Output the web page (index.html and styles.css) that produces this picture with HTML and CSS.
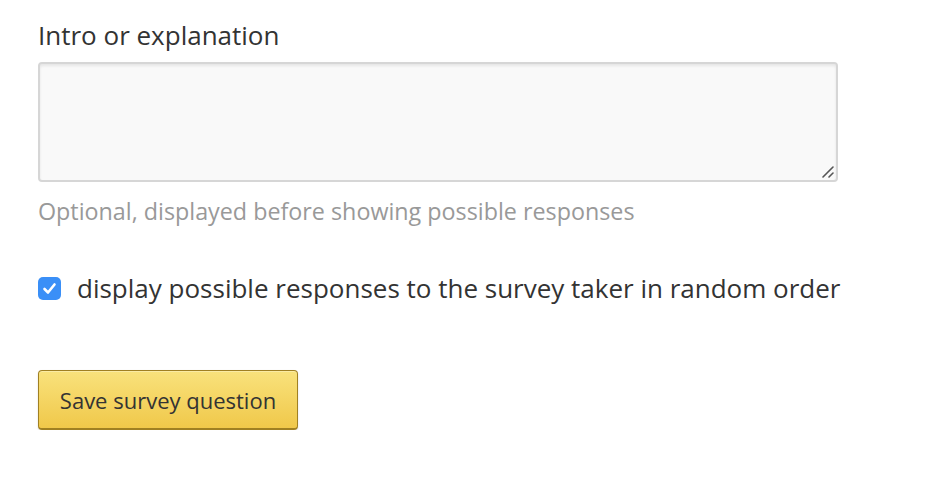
FILE: index.html
```html
<!DOCTYPE html>
<html>
<head>
<meta charset="utf-8">
<link rel="stylesheet" href="styles.css">
</head>
<body>
<form class="form">
  <div class="field">
    <label class="field-label" for="intro">Intro or explanation</label>
    <div class="textarea-wrap">
      <textarea id="intro" class="textarea"></textarea>
      <svg class="grip" width="14" height="14" viewBox="0 0 14 14"><path d="M3 13 L13 3 M9 13 L13 9" stroke="#555" stroke-width="1.6" stroke-linecap="round" fill="none"/></svg>
    </div>
    <p class="help">Optional, displayed before showing possible responses</p>
  </div>
  <label class="check-row">
    <span class="checkbox">
      <svg width="15" height="13" viewBox="0 0 15 13"><path d="M2.5 7 L6 10.5 L12.5 2.5" fill="none" stroke="#fff" stroke-width="2.6" stroke-linecap="round" stroke-linejoin="round"/></svg>
    </span>
    <span class="check-text">display possible responses to the survey taker in random order</span>
  </label>
  <div class="actions">
    <button type="button" class="btn">Save survey question</button>
  </div>
</form>
</body>
</html>
```
FILE: styles.css
```css
html, body {
  margin: 0;
  padding: 0;
  background: #fff;
}
body {
  font-family: "Open Sans", "Noto Sans", sans-serif;
  color: #333;
}
.form {
  padding: 20px 0 0 38px;
}
.field {
  display: flex;
  flex-direction: column;
  align-items: flex-start;
}
.field-label {
  font-size: 26px;
  line-height: 30px;
  color: #333;
  margin-bottom: 12px;
}
.textarea-wrap {
  position: relative;
  width: 800px;
  height: 120px;
}
.textarea {
  display: block;
  box-sizing: border-box;
  width: 800px;
  height: 120px;
  border: 2px solid #d6d6d6;
  border-radius: 4px;
  background: #f9f9f9;
  box-shadow: inset 0 2px 3px rgba(0,0,0,0.08);
  font-family: inherit;
  font-size: 18px;
  margin: 0;
  resize: none;
}
.grip {
  position: absolute;
  right: 4px;
  bottom: 4px;
  pointer-events: none;
}
.help {
  margin: 14px 0 0;
  font-size: 23.3px;
  line-height: 30px;
  color: #999;
  white-space: nowrap;
}
.check-row {
  margin-top: 47px;
  display: flex;
  align-items: center;
  gap: 16px;
}
.checkbox {
  flex: none;
  width: 23px;
  height: 23px;
  border-radius: 5px;
  background: #3a8ff7;
  display: flex;
  align-items: center;
  justify-content: center;
}
.check-text {
  font-size: 26px;
  line-height: 30px;
  color: #333;
  white-space: nowrap;
}
.actions {
  margin-top: 67px;
}
.btn {
  box-sizing: border-box;
  width: 260px;
  height: 60px;
  border: 1px solid #a08022;
  border-bottom-width: 2px;
  border-radius: 4px;
  background: linear-gradient(#f9e27c, #f0c84a);
  box-shadow: 0 1px 2px rgba(0,0,0,0.15), inset 0 1px 0 rgba(255,255,255,0.3);
  font-family: "Open Sans", "Noto Sans", sans-serif;
  font-size: 22px;
  color: #333;
  padding: 0;
}
```
